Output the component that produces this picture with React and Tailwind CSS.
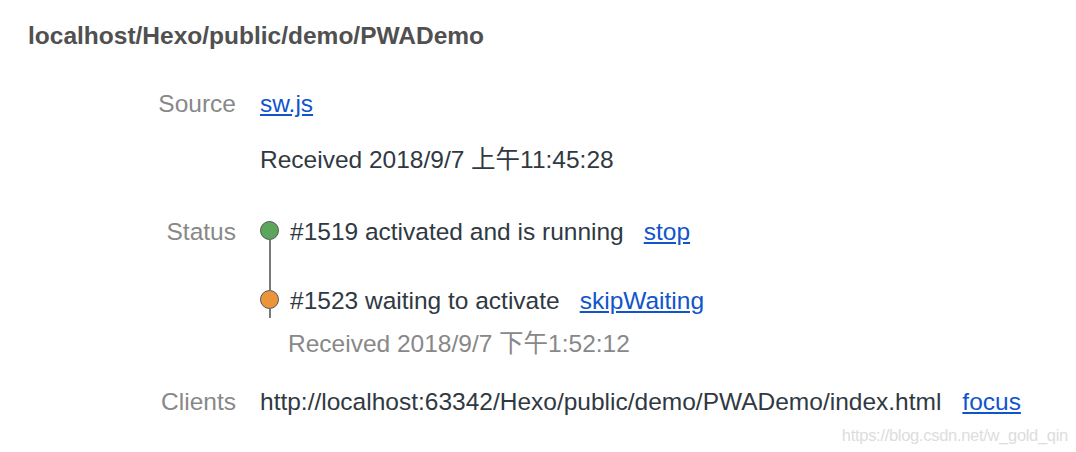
export default function App() {
  const label = 'w-[236px] shrink-0 text-right text-[#888888]'
  const link = 'text-[#1155cc] underline underline-offset-2'

  return (
    <div className="w-[1076px] h-[452px] bg-white overflow-hidden font-['Liberation_Sans','Noto_Sans_CJK_SC',sans-serif] text-[24.5px] leading-[28px] text-[#303942]">
      <div className="pt-[22px] pl-[28px] font-bold text-[#505050]">localhost/Hexo/public/demo/PWADemo</div>

      {/* Source */}
      <div className="flex gap-[24px] mt-[40px]">
        <div className={label}>Source</div>
        <div className="flex flex-col gap-[28px]">
          <a className={link}>sw.js</a>
          <div>Received 2018/9/7 上午11:45:28</div>
        </div>
      </div>

      {/* Status */}
      <div className="flex gap-[24px] mt-[44px]">
        <div className={label}>Status</div>
        <div className="flex flex-col">
          <div className="flex gap-[11px]">
            <div className="flex flex-col items-center w-[19px] mt-[3px]">
              <div className="w-[19px] h-[19px] rounded-full bg-[#5ba65a] border-[1.5px] border-[#555555]"></div>
              <div className="w-[2px] h-[50px] bg-[#7a7a7a]"></div>
            </div>
            <div className="flex">
              <span>#1519 activated and is running</span>
              <a className={`${link} ml-[20px]`}>stop</a>
            </div>
          </div>
          <div className="flex gap-[11px]">
            <div className="flex flex-col items-center w-[19px]">
              <div className="w-[19px] h-[19px] rounded-full bg-[#ec943a] border-[1.5px] border-[#555555]"></div>
              <div className="w-[2px] h-[9px] bg-[#7a7a7a]"></div>
            </div>
            <div className="flex -mt-[3px]">
              <span>#1523 waiting to activate</span>
              <a className={`${link} ml-[20px]`}>skipWaiting</a>
            </div>
          </div>
          <div className="mt-[12px] ml-[28px] text-[#888888]">Received 2018/9/7 下午1:52:12</div>
        </div>
      </div>

      {/* Clients */}
      <div className="flex gap-[24px] mt-[30px]">
        <div className={label}>Clients</div>
        <div className="flex">
          <span>http://localhost:63342/Hexo/public/demo/PWADemo/index.html</span>
          <a className={`${link} ml-[21px]`}>focus</a>
        </div>
      </div>

      <div className="flex justify-end pr-[8px] mt-[9px] text-[16.5px] leading-[20px] text-[#dddddd] tracking-[-0.3px]">
        https://blog.csdn.net/w_gold_qin
      </div>
    </div>
  )
}
